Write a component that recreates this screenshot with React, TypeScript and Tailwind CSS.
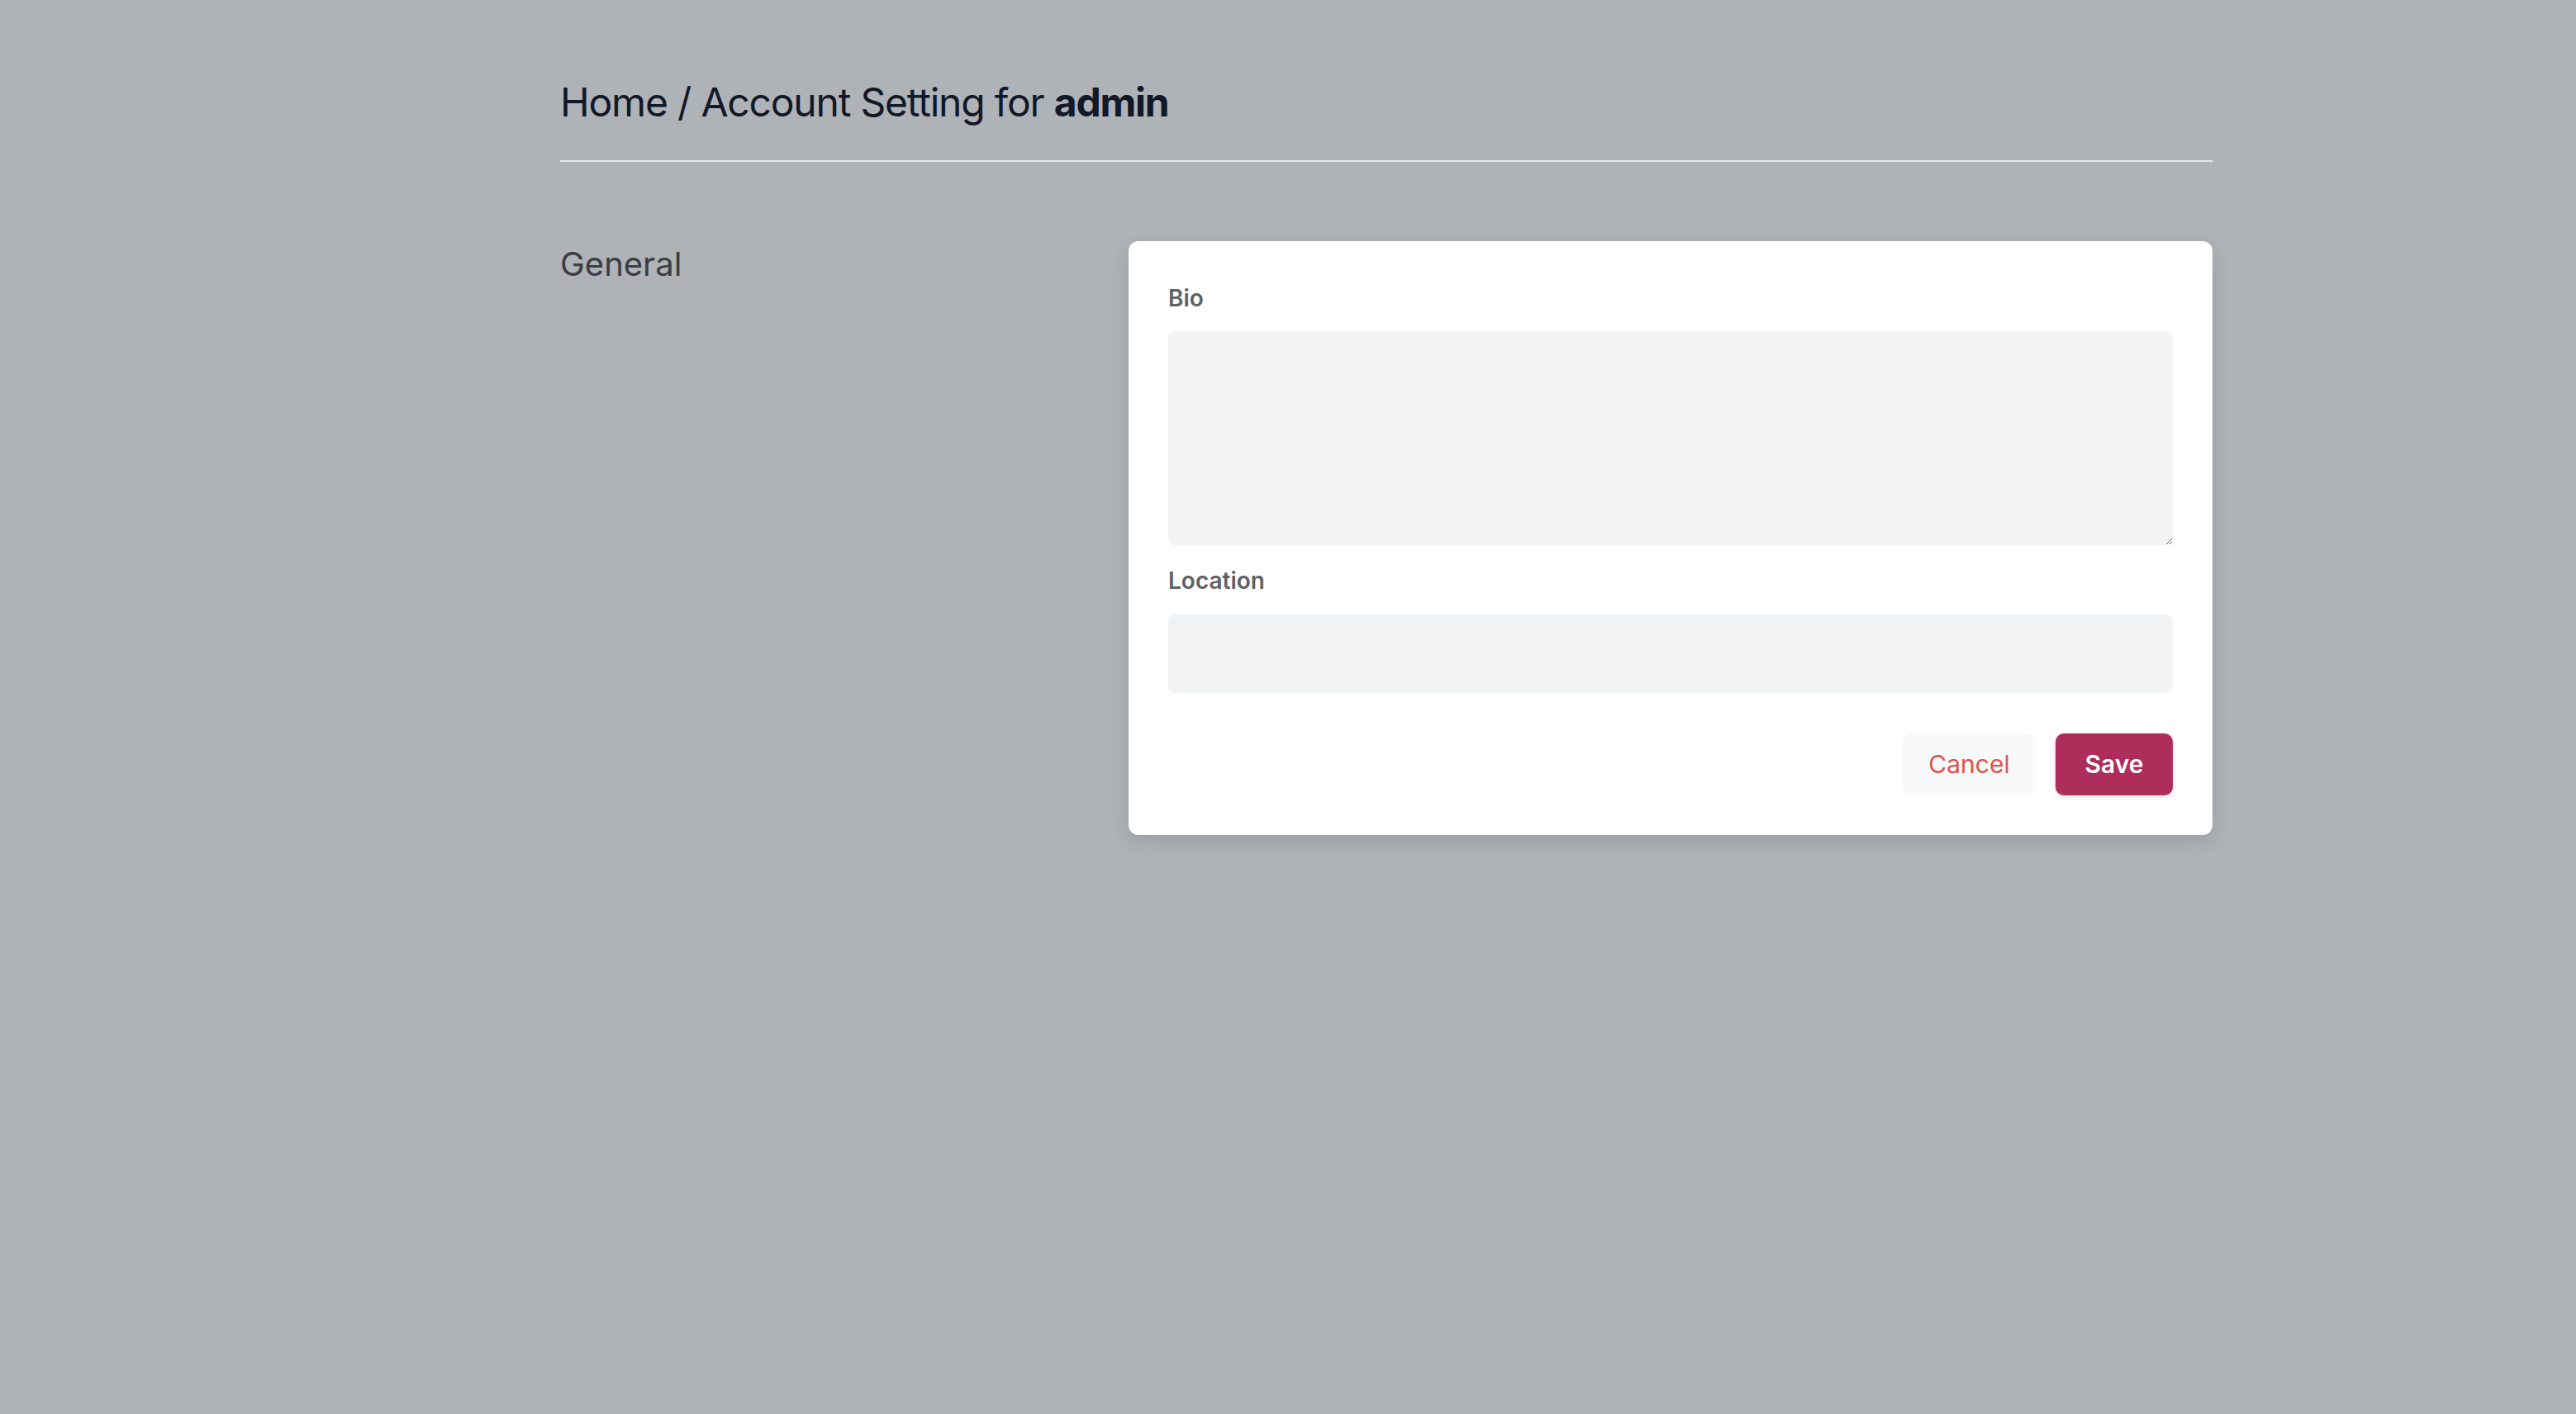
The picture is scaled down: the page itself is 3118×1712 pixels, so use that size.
export default function App() {
  return (
    <div className="min-h-screen w-full bg-[#afb2b7] font-['Inter',sans-serif]">
      <div className="ml-[678px] w-[2000px] pt-[88px]">
        <div className="border-b-2 border-[#e5e7eb] pb-[34px]">
          <h1 className="text-[48px] leading-[72px] tracking-[-0.025em] text-[#111827]">
            Home / Account Setting for <span className="font-bold">admin</span>
          </h1>
        </div>

        <div className="mt-[96px] grid grid-cols-3 gap-[64px]">
          <div>
            <h2 className="text-[40px] leading-[56px] text-[#3a3d42]">General</h2>
          </div>

          <div className="col-span-2 rounded-[12px] bg-white p-[48px] shadow-[0_8px_24px_rgba(0,0,0,0.12)]">
            <label className="mt-[1px] block text-[28px] leading-[40px] font-semibold text-[#606164]">Bio</label>
            <textarea className="mt-[20px] block h-[259px] w-full rounded-[8px] bg-[#f2f3f5] outline-none" />

            <label className="mt-[23px] block text-[28px] leading-[40px] font-semibold text-[#606164]">Location</label>
            <input className="mt-[21px] block h-[95px] w-full rounded-[8px] bg-[#f2f3f5] outline-none" />

            <div className="mt-[49px] flex justify-end gap-[24px]">
              <button className="h-[75px] w-[161px] rounded-[10px] bg-[#f8f9fb] text-[30px] text-[#e0524a]">
                Cancel
              </button>
              <button className="h-[75px] w-[142px] rounded-[10px] bg-[#af2d5b] text-[30px] font-semibold text-white shadow-[0_2px_6px_rgba(0,0,0,0.12)]">
                Save
              </button>
            </div>
          </div>
        </div>
      </div>
    </div>
  );
}
